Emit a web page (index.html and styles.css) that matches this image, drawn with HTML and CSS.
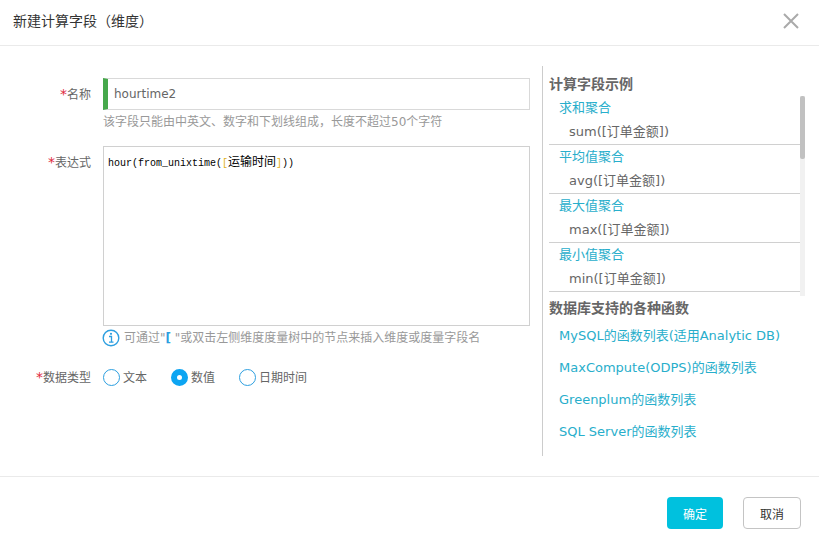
FILE: index.html
```html
<!DOCTYPE html>
<html lang="zh-CN">
  <head>
    <meta charset="UTF-8" />
    <meta name="viewport" content="width=device-width, initial-scale=1.0" />
    <title>新建计算字段</title>
    <link rel="stylesheet" href="styles.css">
  </head>
  <body>
    <form class="dialog">
      <header class="dialog-header">
        <h1>新建计算字段（维度）</h1>
        <button type="button" class="close" aria-label="关闭">
          <svg width="18" height="18" viewBox="0 0 18 18">
            <path d="M2 2L16 16M16 2L2 16" stroke="#aaa" stroke-width="2" fill="none" />
          </svg>
        </button>
      </header>

      <div class="dialog-body">
        <div class="fields">
          <label class="field-label" for="name"><span class="required">*</span>名称</label>
          <div class="field">
            <input type="text" class="name-input" id="name" value="hourtime2" />
            <p class="help">该字段只能由中英文、数字和下划线组成，长度不超过50个字符</p>
          </div>

          <label class="field-label" for="expression"><span class="required">*</span>表达式</label>
          <div class="field">
            <div class="editor">
              <pre class="highlight" aria-hidden="true">hour(from_unixtime(<span class="bracket">[</span><span class="column-name">运输时间</span><span class="bracket">]</span>))</pre>
              <textarea class="code" id="expression" spellcheck="false">hour(from_unixtime([运输时间]))</textarea>
            </div>
            <p class="hint">
              <svg class="info" width="18" height="18" viewBox="0 0 18 18">
                <circle cx="9" cy="9" r="7.8" fill="none" stroke="#2d9fe0" stroke-width="1.4" />
                <path d="M7 7.5H9.5V13M7 13.2H11.5" fill="none" stroke="#2d9fe0" stroke-width="1.3" />
                <circle cx="9" cy="4.8" r="1.1" fill="#2d9fe0" />
              </svg>
              <span>可通过"<b>[</b> "或双击左侧维度度量树中的节点来插入维度或度量字段名</span>
            </p>
          </div>

          <span class="field-label type-label" id="type-label"><span class="required">*</span>数据类型</span>
          <div class="field radios" role="radiogroup" aria-labelledby="type-label">
            <label><input type="radio" name="type" />文本</label>
            <label><input type="radio" name="type" checked />数值</label>
            <label><input type="radio" name="type" />日期时间</label>
          </div>
        </div>

        <aside class="reference">
          <h2>计算字段示例</h2>
          <div class="examples">
            <dl>
              <dt>求和聚合</dt>
              <dd>sum([订单金额])</dd>
              <dt>平均值聚合</dt>
              <dd>avg([订单金额])</dd>
              <dt>最大值聚合</dt>
              <dd>max([订单金额])</dd>
              <dt>最小值聚合</dt>
              <dd>min([订单金额])</dd>
            </dl>
            <div class="scroll-track"><div class="scroll-thumb"></div></div>
          </div>
          <h2>数据库支持的各种函数</h2>
          <nav class="links">
            <a href="#">MySQL的函数列表(适用Analytic DB)</a>
            <a href="#">MaxCompute(ODPS)的函数列表</a>
            <a href="#">Greenplum的函数列表</a>
            <a href="#">SQL Server的函数列表</a>
          </nav>
        </aside>
      </div>

      <footer class="dialog-footer">
        <button type="submit" class="btn primary">确定</button>
        <button type="button" class="btn">取消</button>
      </footer>
    </form>
  </body>
</html>
```
FILE: styles.css
```css
* {
  box-sizing: border-box;
}

body {
  margin: 0;
  background: #fff;
  color: #666;
  font-family: 'DejaVu Sans', 'Noto Sans CJK SC', sans-serif;
  font-size: 12px;
  line-height: 24px;
}

h1,
h2,
p,
dl,
dd,
pre {
  margin: 0;
}

button,
input,
textarea {
  font-family: inherit;
}

.dialog-header {
  display: flex;
  align-items: center;
  justify-content: space-between;
  height: 46px;
  padding: 0 19px 4px 13px;
  border-bottom: 1px solid #eaeaea;
}

.dialog-header h1 {
  color: #333;
  font-size: 14px;
  font-weight: normal;
}

.close {
  display: flex;
  padding: 0;
  border: none;
  background: none;
  cursor: pointer;
}

.dialog-body {
  display: flex;
  padding: 20px 0;
}

.fields {
  flex: 1;
  display: grid;
  grid-template-columns: 91px 1fr;
  column-gap: 12px;
  align-content: start;
  padding: 12px 12px 0 0;
}

.field-label {
  padding-top: 4px;
  text-align: right;
}

.required {
  color: #e0283c;
  font-size: 14px;
}

.name-input {
  display: block;
  width: 100%;
  height: 32px;
  padding: 0 6px;
  border: 1px solid #d9d9d9;
  border-left: 5px solid #46a84b;
  color: #666;
  font-size: 12px;
  outline: none;
}

.help {
  margin-bottom: 12px;
  color: #999;
}

.editor {
  position: relative;
  height: 180px;
  border: 1px solid #d0d0d0;
}

.highlight,
.code {
  width: 100%;
  height: 100%;
  padding: 8px 4px;
  font-family: 'Liberation Mono', 'Noto Sans CJK SC', monospace;
  font-size: 10px;
  line-height: 16px;
  white-space: pre-wrap;
}

.highlight {
  color: #000;
}

/* the textarea lies over the coloured copy of its text */
.code {
  position: absolute;
  inset: 0;
  border: none;
  background: none;
  color: transparent;
  caret-color: #000;
  resize: none;
  outline: none;
}

.bracket {
  color: #e0b020;
}

.column-name {
  font-size: 12px;
}

.hint {
  display: flex;
  align-items: center;
  gap: 4px;
  color: #999;
}

.info {
  margin-left: -1px;
}

.hint b {
  color: #2d9fe0;
}

.type-label,
.radios {
  padding-top: 15px;
}

.radios {
  display: flex;
  gap: 24px;
}

.radios label {
  display: flex;
  align-items: center;
  gap: 3px;
}

.radios input {
  appearance: none;
  width: 17px;
  height: 17px;
  margin: 0;
  border: 1px solid #2d9fe0;
  border-radius: 50%;
}

.radios input:checked {
  border: 6px solid #0da5f2;
}

.reference {
  width: 277px;
  padding: 6px 14px 8px 6px;
  border-left: 1px solid #ccc;
}

.reference h2 {
  font-size: 14px;
  line-height: 24px;
}

.examples {
  display: flex;
  height: 200px;
  font-size: 13px;
}

.examples dl {
  flex: 1;
}

.examples dt {
  padding-left: 10px;
  color: #28aecb;
}

.examples dd {
  padding-left: 20px;
  border-bottom: 1px solid #d0d0d0;
}

.scroll-track {
  width: 5px;
  background: #f1f1f1;
}

.scroll-thumb {
  height: 63px;
  border-radius: 2px;
  background: #c1c1c1;
}

.links {
  display: flex;
  flex-direction: column;
  padding-left: 10px;
}

.links a {
  color: #28aecb;
  font-size: 13px;
  line-height: 32px;
  text-decoration: none;
}

.dialog-footer {
  display: flex;
  justify-content: flex-end;
  gap: 20px;
  padding: 20px 18px 9px;
  border-top: 1px solid #eaeaea;
}

.btn {
  height: 32px;
  padding: 0 16px;
  border: 1px solid #c4c4c4;
  border-radius: 4px;
  background: #fff;
  color: #333;
  font-size: 12px;
  cursor: pointer;
}

.btn.primary {
  border: none;
  background: #00c1de;
  color: #fff;
}
```
